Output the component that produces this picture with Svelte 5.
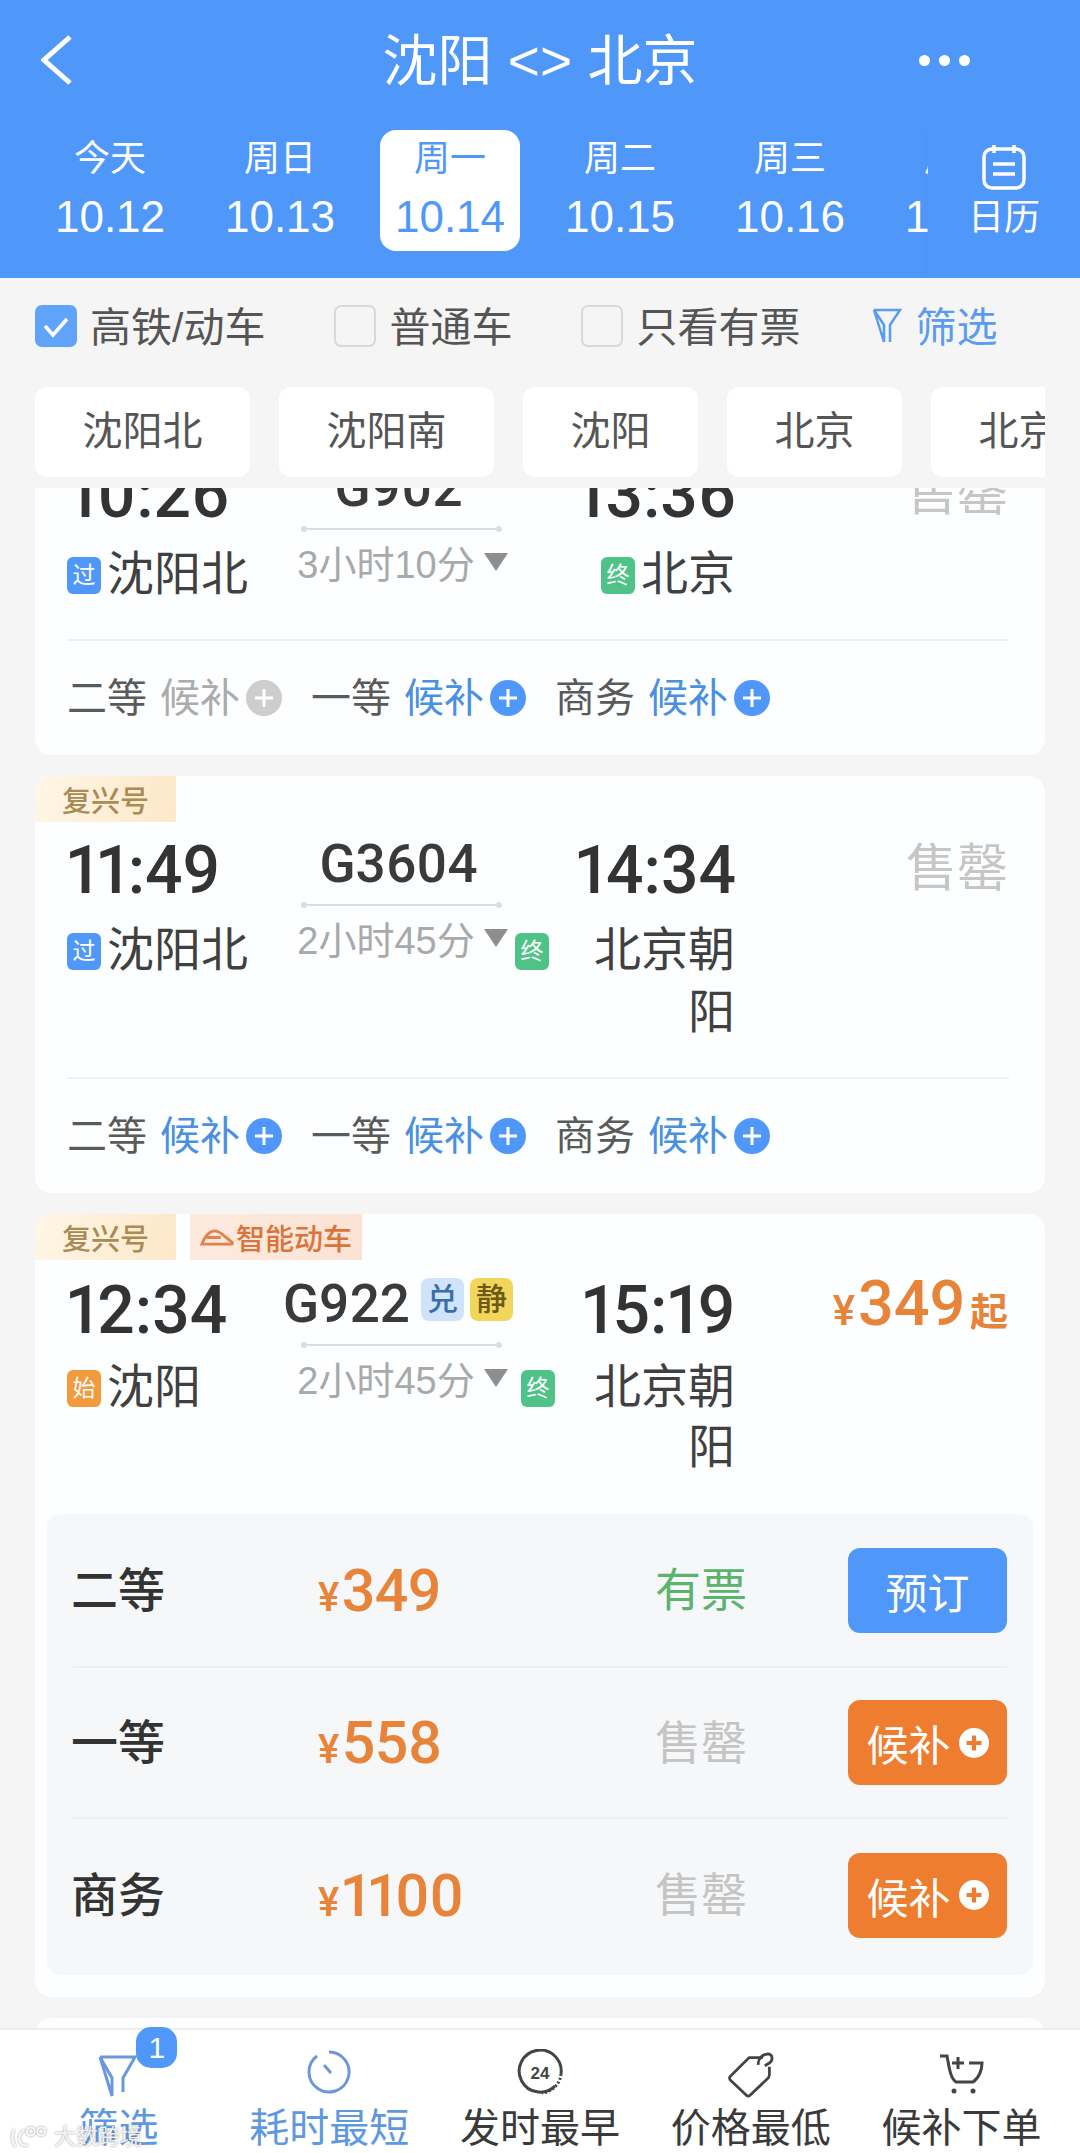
<script lang="ts">
	const days = [
		{ week: '今天', date: '10.12' },
		{ week: '周日', date: '10.13' },
		{ week: '周一', date: '10.14', active: true },
		{ week: '周二', date: '10.15' },
		{ week: '周三', date: '10.16' },
		{ week: '周四', date: '10.17' }
	];
	const checks = [
		{ label: '高铁/动车', on: true },
		{ label: '普通车', on: false },
		{ label: '只看有票', on: false }
	];
	const stations = ['沈阳北', '沈阳南', '沈阳', '北京', '北京朝阳'];
	const seatRows = [
		{ name: '二等', price: '349', status: '有票', ok: true },
		{ name: '一等', price: '558', status: '售罄', ok: false },
		{ name: '商务', price: '1100', status: '售罄', ok: false }
	];
	const tabs = ['筛选', '耗时最短', '发时最早', '价格最低', '候补下单'];
</script>

{#snippet plus(cls)}
	<svg class="plus {cls}" viewBox="0 0 36 36">
		<circle cx="18" cy="18" r="18" />
		<path d="M18 9v18M9 18h18" />
	</svg>
{/snippet}

{#snippet seat(name, off)}
	<div class="seat">
		<span class="seat-name">{name}</span>
		<span class="seat-wait" class:off>候补</span>
		{@render plus(off ? 'grey' : 'blue')}
	</div>
{/snippet}

{#snippet mid(no, dur)}
	<div class="no-cell">
		<span class="no">{no}</span>
	</div>
	<div class="dur">{dur}<i class="tri"></i></div>
{/snippet}

<div class="page">
	<header class="head">
		<div class="title-row">
			<svg class="back" viewBox="0 0 32 50"><path d="M29 2 3 25l26 23" /></svg>
			<h1>沈阳 &lt;&gt; 北京</h1>
			<div class="dots"><i></i><i></i><i></i></div>
		</div>
		<div class="date-row">
			<div class="days">
				{#each days as d}
					<div class="day" class:active={d.active}>
						<span class="week">{d.week}</span>
						<span class="date">{d.date}</span>
					</div>
				{/each}
			</div>
			<div class="cal">
				<svg viewBox="0 0 46 48">
					<rect x="3" y="6" width="40" height="39" rx="8" />
					<path d="M13 2v8M33 2v8M12 21h22M12 31h22" />
				</svg>
				<span>日历</span>
			</div>
		</div>
	</header>

	<div class="filters">
		{#each checks as c}
			<div class="check">
				<span class="box" class:on={c.on}>
					{#if c.on}
						<svg viewBox="0 0 42 42"><path d="M10 21l8 9 14-16" /></svg>
					{/if}
				</span>
				<span class="check-text">{c.label}</span>
			</div>
		{/each}
		<div class="check filter-link">
			<svg viewBox="0 0 30 36"><path d="M2 2h26L18 17v17M12 34V17L2 2z" /></svg>
			<span class="check-text">筛选</span>
		</div>
	</div>

	<div class="chips">
		{#each stations as s}
			<div class="chip">{s}</div>
		{/each}
	</div>

	<div class="list">
		<section class="card first">
			<div class="tags"></div>
			<div class="train">
				<div class="time">10:26</div>
				{@render mid('G902', '3小时10分')}
				<div class="time end">13:36</div>
				<div class="sold">售罄</div>
				<div class="from"><b class="mark pass">过</b>沈阳北</div>
				<div class="to"><b class="mark stop">终</b><span class="to-name">北京</span></div>
			</div>
			<div class="seats">
				{@render seat('二等', true)}
				{@render seat('一等', false)}
				{@render seat('商务', false)}
			</div>
		</section>

		<section class="card">
			<div class="tags"><span class="tag gold">复兴号</span></div>
			<div class="train">
				<div class="time">11:49</div>
				{@render mid('G3604', '2小时45分')}
				<div class="time end">14:34</div>
				<div class="sold">售罄</div>
				<div class="from"><b class="mark pass">过</b>沈阳北</div>
				<div class="to"><b class="mark stop">终</b><span class="to-name">北京朝阳</span></div>
			</div>
			<div class="seats">
				{@render seat('二等', false)}
				{@render seat('一等', false)}
				{@render seat('商务', false)}
			</div>
		</section>

		<section class="card open">
			<div class="tags">
				<span class="tag gold">复兴号</span>
				<span class="tag peach">
					<svg viewBox="0 0 36 18">
						<path d="M2 16C5 8 10 2 16 2c5 0 10 6 18 12q1 2-1 2zM7 9h15" />
					</svg>智能动车
				</span>
			</div>
			<div class="train">
				<div class="time">12:34</div>
				<div class="no-cell wide">
					<span class="no">G922</span>
					<b class="perk blue">兑</b>
					<b class="perk yellow">静</b>
				</div>
				<div class="dur">2小时45分<i class="tri"></i></div>
				<div class="time end">15:19</div>
				<div class="from-price"><small>¥</small>349<em>起</em></div>
				<div class="from"><b class="mark start">始</b>沈阳</div>
				<div class="to"><b class="mark stop">终</b><span class="to-name tight">北京朝阳</span></div>
			</div>
			<div class="panel">
				{#each seatRows as r}
					<div class="row">
						<span class="row-name">{r.name}</span>
						<span class="row-price"><small>¥</small>{r.price}</span>
						<span class="row-status" class:ok={r.ok}>{r.status}</span>
						{#if r.ok}
							<button type="button" class="btn book">预订</button>
						{:else}
							<button type="button" class="btn wait">候补{@render plus('white')}</button>
						{/if}
					</div>
				{/each}
			</div>
		</section>

		<section class="card"></section>
	</div>

	<nav class="tabbar">
		{#each tabs as t, i}
			<div class="tab" class:on={i < 2}>
				<div class="tab-icon">
					{#if i === 0}
						<svg class="i-funnel" viewBox="0 0 40 44"><path d="M2 3h35L25 24v14M14 42V24L2 3z" /></svg>
						<span class="count">1</span>
					{:else if i === 1}
						<svg class="i-line up" viewBox="0 0 46 46">
							<path d="M23 3a20 20 0 1 1-12 4" />
							<path d="M18 16l7 8" />
						</svg>
					{:else if i === 2}
						<svg class="i-line dark up" viewBox="0 0 46 46">
							<path d="M38 37A21 21 0 1 1 44 25" />
							<path class="dash" d="M44 25a21 21 0 0 1-19 19" />
							<text x="23" y="30" text-anchor="middle">24</text>
						</svg>
					{:else if i === 3}
						<svg class="i-line dark" viewBox="0 0 50 50">
							<path d="M38 6H23L2 27q-1 2 1 4l17 16q2 2 4 0l20-19q1-2 1-4v-8" />
							<path d="M33 14c-1-7 5-12 11-12 5 1 5 7 1 10l-5 3" />
						</svg>
					{:else}
						<svg class="i-line dark" viewBox="0 0 46 42">
							<path d="M1 2h7c2 10 3 22 9 26h17c6-4 9-12 9-19H30" />
							<path d="M19 3v12M13 9h12" />
							<circle class="wheel" cx="15" cy="37" r="2.5" />
							<circle class="wheel" cx="34" cy="37" r="2.5" />
						</svg>
					{/if}
				</div>
				<span class="tab-label">{t}</span>
			</div>
		{/each}
		<div class="watermark">
			<svg viewBox="0 0 50 30">
				<path d="M5 5c-3 8-3 16 2 22M18 6c-5 4-8 10-5 16 2 4 6 4 9 3" />
				<circle cx="26" cy="8" r="5" />
				<circle cx="39" cy="8" r="5" />
			</svg>
			<span>大数跨境</span>
		</div>
	</nav>
</div>

<style>
	:global(body) {
		margin: 0;
		background: #f5f5f5;
	}

	.page {
		--blue: #4f98fa;
		--ink: #333;
		width: 1080px;
		height: 2153px;
		display: flex;
		flex-direction: column;
		overflow: hidden;
		background: #f5f5f5;
		color: var(--ink);
		font-family: 'Liberation Sans', 'Noto Sans CJK SC', sans-serif;
	}

	/* header */
	.head {
		height: 278px;
		flex: none;
		background: var(--blue);
		color: #fff;
	}

	.title-row {
		height: 130px;
		display: grid;
		grid-template-columns: 1fr auto 1fr;
		align-items: start;
	}

	.back {
		width: 32px;
		height: 50px;
		margin: 35px 0 0 41px;
		fill: none;
		stroke: #fff;
		stroke-width: 5;
	}

	h1 {
		margin: 23px 0 0;
		font-size: 55px;
		line-height: 76px;
		font-weight: 400;
	}

	.dots {
		justify-self: end;
		display: flex;
		gap: 9px;
		margin: 55px 110px 0 0;
	}

	.dots i {
		width: 11px;
		height: 11px;
		border-radius: 50%;
		background: #fff;
	}

	.date-row {
		display: flex;
		height: 148px;
	}

	.days {
		width: 928px;
		padding-left: 25px;
		box-sizing: border-box;
		display: flex;
		overflow: hidden;
		flex: none;
	}

	.day {
		flex: none;
		width: 140px;
		height: 121px;
		margin: 0 15px;
		display: flex;
		flex-direction: column;
		align-items: center;
		border-radius: 16px;
	}

	.day.active {
		background: #fff;
		color: var(--blue);
	}

	.week {
		font-size: 36px;
		line-height: 50px;
		margin-top: 4px;
	}

	.date {
		font-size: 44px;
		line-height: 54px;
		margin-top: 6px;
		white-space: nowrap;
	}

	.cal {
		flex: 1;
		display: flex;
		flex-direction: column;
		align-items: center;
		box-shadow: -4px 0 6px rgba(40, 90, 170, 0.025);
	}

	.cal svg {
		width: 46px;
		height: 48px;
		margin-top: 13px;
		fill: none;
		stroke: #fff;
		stroke-width: 3.5;
	}

	.cal span {
		font-size: 36px;
		line-height: 46px;
		margin-top: 4px;
	}

	/* filter row */
	.filters {
		display: flex;
		gap: 69px;
		padding: 27px 35px 40px;
		flex: none;
	}

	.check {
		display: flex;
		align-items: center;
		gap: 13px;
		height: 42px;
		font-size: 41px;
		color: #555;
		white-space: nowrap;
	}

	.check-text {
		padding-bottom: 4px;
	}

	.box {
		width: 42px;
		height: 42px;
		box-sizing: border-box;
		border: 2px solid #d9d9d9;
		border-radius: 7px;
	}

	.box.on {
		background: #60a3fb;
		border: none;
	}

	.box svg {
		display: block;
		fill: none;
		stroke: #fff;
		stroke-width: 3.5;
	}

	.filter-link {
		margin-left: 3px;
		color: #5a9ced;
	}

	.filter-link svg {
		width: 30px;
		height: 36px;
		fill: none;
		stroke: #5a9ced;
		stroke-width: 2.5;
	}

	.chips {
		display: flex;
		gap: 29px;
		margin: 0 35px;
		overflow: hidden;
		flex: none;
	}

	.chip {
		flex: none;
		height: 90px;
		line-height: 88px;
		padding: 0 47.5px;
		font-size: 40px;
		color: #555;
		background: #fff;
		border-radius: 12px;
	}

	/* train list */
	.list {
		flex: 1;
		min-height: 0;
		margin-top: 11px;
		padding: 0 35px;
		overflow: hidden;
		display: flex;
		flex-direction: column;
		gap: 21px;
	}

	.card {
		flex: none;
		background: #fdfeff;
		border-radius: 16px;
		min-height: 120px;
		overflow: hidden;
	}

	.first {
		margin-top: -88px;
	}

	.tags {
		height: 46px;
		display: flex;
		gap: 14px;
	}

	.tag {
		height: 46px;
		display: flex;
		align-items: center;
		justify-content: center;
		font-size: 29px;
		font-weight: 500;
	}

	.gold {
		width: 141px;
		color: #a98b55;
		background: linear-gradient(100deg, #fff6e6, #fde8c9);
	}

	.peach {
		width: 172px;
		gap: 2px;
		color: #d9743c;
		background: linear-gradient(100deg, #fdeadf, #fbe3d3);
	}

	.peach svg {
		width: 34px;
		height: 17px;
		fill: none;
		stroke: #e2824a;
		stroke-width: 3;
	}

	.train {
		display: grid;
		grid-template-columns: 228px 215px 225px 1fr;
		grid-template-rows: 85px auto;
		padding: 0 37px 0 32px;
		font-variant-numeric: proportional-nums;
	}

	.time {
		margin-top: 13px;
		font-family: Roboto, 'Liberation Sans', sans-serif;
		font-weight: 500;
		font-size: 66px;
		line-height: 72px;
		color: #333;
		white-space: nowrap;
	}

	.time.end {
		margin-right: -1px;
		text-align: right;
	}

	.no-cell {
		height: 84px;
		width: 201px;
		margin-left: 6px;
		box-sizing: border-box;
		border-bottom: 2px solid #dcdde0;
		display: flex;
		align-items: flex-start;
		justify-content: center;
		gap: 11px;
		position: relative;
	}

	.no-cell::before,
	.no-cell::after {
		content: '';
		position: absolute;
		bottom: -4px;
		width: 6px;
		height: 6px;
		border-radius: 50%;
		background: #dcdde0;
	}

	.no-cell::before {
		left: 0;
	}

	.no-cell::after {
		right: 0;
	}

	.no-cell.wide {
		justify-content: flex-start;
		margin-left: 6px;
		overflow: visible;
	}

	.no {
		margin: 10px 0 0 -6px;
		font-family: Roboto, 'Liberation Sans', sans-serif;
		font-weight: 500;
		font-size: 53px;
		line-height: 64px;
		color: #3a3a3a;
		white-space: nowrap;
	}

	.wide .no {
		margin-left: -18px;
	}

	.perk {
		flex: none;
		width: 43px;
		height: 43px;
		margin-top: 16px;
		border-radius: 8px;
		font-size: 31px;
		line-height: 43px;
		text-align: center;
		font-weight: 500;
	}

	.perk + .perk {
		margin-left: -5px;
	}

	.perk.blue {
		background: #cfe3fb;
		color: #3b6ea8;
	}

	.perk.yellow {
		background: #f2d65c;
		color: #6d5a17;
	}

	.dur {
		grid-row: 2;
		grid-column: 2;
		align-self: start;
		margin-top: 10px;
		font-size: 38px;
		line-height: 48px;
		color: #a9a9a9;
		white-space: nowrap;
		display: flex;
		align-items: center;
		justify-content: center;
		gap: 9px;
	}

	.tri {
		width: 0;
		height: 0;
		margin-bottom: 6px;
		border-left: 12px solid transparent;
		border-right: 12px solid transparent;
		border-top: 18px solid #8e8e8e;
	}

	.from,
	.to {
		grid-row: 2;
		margin-top: 12px;
		padding-bottom: 34px;
		font-size: 47px;
		line-height: 62px;
		color: #404040;
		display: flex;
		align-items: flex-start;
	}

	.from {
		grid-column: 1;
	}

	.to {
		grid-column: 3;
		justify-content: flex-end;
	}

	.to-name {
		max-width: 180px;
		text-align: right;
	}

	.to-name.tight {
		max-width: 174px;
	}

	.mark {
		flex: none;
		width: 34px;
		height: 37px;
		margin: 14px 6px 0 0;
		border-radius: 6px;
		color: #fff;
		font-size: 23px;
		line-height: 37px;
		text-align: center;
		font-weight: 400;
	}

	.pass {
		background: #4f98fa;
	}

	.stop {
		background: #4fc387;
	}

	.start {
		background: #f29a3e;
	}

	.sold {
		grid-row: 1;
		grid-column: 4;
		margin-top: 12px;
		text-align: right;
		font-size: 51px;
		line-height: 70px;
		color: #c6c6c6;
	}

	.from-price {
		grid-row: 1;
		grid-column: 4;
		text-align: right;
		margin-top: 10px;
		font-family: Roboto, 'Liberation Sans', sans-serif;
		font-weight: 500;
		font-size: 63px;
		line-height: 64px;
		color: #e8833a;
		white-space: nowrap;
	}

	.from-price small {
		font-size: 42px;
		margin-right: 3px;
	}

	.from-price em {
		font-style: normal;
		font-size: 38px;
		font-family: 'Noto Sans CJK SC', sans-serif;
		font-weight: 700;
		margin-left: 4px;
	}

	.seats {
		margin: 0 36px 0 32px;
		border-top: 2px solid #eff0f1;
		height: 114px;
		display: flex;
		align-items: center;
	}

	.seat {
		width: 244px;
		flex: none;
		display: flex;
		align-items: center;
		font-size: 40px;
		color: #5a5a5a;
	}

	.seat span {
		padding-bottom: 6px;
	}

	.seat-wait {
		margin-left: 13px;
		color: #4a90e2;
	}

	.seat-wait.off {
		color: #ababab;
	}

	.plus {
		width: 36px;
		height: 36px;
		margin-left: 6px;
		flex: none;
	}

	.plus path {
		fill: none;
		stroke: #fff;
		stroke-width: 3;
	}

	.plus.blue circle {
		fill: var(--blue);
	}

	.plus.grey circle {
		fill: #cdcdcd;
	}

	.plus.white {
		width: 30px;
		height: 30px;
		margin-left: 8px;
	}

	.plus.white circle {
		fill: #fff;
	}

	.plus.white path {
		stroke: #ee7d2f;
		stroke-width: 5;
	}

	.open .train {
		padding-top: 2px;
	}

	.open .from,
	.open .to {
		margin-top: 10px;
		padding-bottom: 0;
		line-height: 60px;
	}

	.open .mark {
		margin-top: 13px;
	}

	.panel {
		margin: 37px 12px 22px;
		padding: 0 26px;
		background: #f6f7f9;
		border-radius: 14px;
		display: grid;
		grid-template-rows: 154px 151px 156px;
	}

	.row {
		display: grid;
		grid-template-columns: 245px 337px 193px 159px;
		align-items: center;
		border-bottom: 2px solid #eeeff1;
	}

	.row:last-child {
		border-bottom: none;
		padding-bottom: 4px;
	}

	.row-name {
		margin-left: -2px;
		padding-bottom: 8px;
		font-size: 47px;
		font-weight: 500;
		color: #333;
	}

	.row-price {
		font-family: Roboto, 'Liberation Sans', sans-serif;
		font-weight: 500;
		font-size: 59px;
		font-variant-numeric: proportional-nums;
		letter-spacing: -0.5px;
		color: #e8833a;
	}

	.row-price small {
		font-size: 40px;
		margin-right: 3px;
	}

	.row-status {
		padding-bottom: 8px;
		font-size: 46px;
		color: #c4c4c4;
	}

	.row-status.ok {
		color: #5cb36c;
	}

	.btn {
		width: 159px;
		height: 85px;
		border: none;
		border-radius: 12px;
		padding: 0;
		color: #fff;
		font: inherit;
		font-size: 42px;
		display: flex;
		align-items: center;
		justify-content: center;
	}

	.book {
		background: #4f98fa;
	}

	.wait {
		background: #ee7d2f;
	}

	/* tab bar */
	.tabbar {
		position: relative;
		flex: none;
		height: 125px;
		box-sizing: border-box;
		padding: 0 13px;
		background: #fff;
		border-top: 2px solid #eeeeee;
		display: grid;
		grid-template-columns: repeat(5, 1fr);
	}

	.tab {
		display: flex;
		flex-direction: column;
		align-items: center;
		color: #3a3a3a;
	}

	.tab.on {
		color: #5e98e0;
	}

	.tab-icon {
		position: relative;
		width: 50px;
		height: 70px;
		display: flex;
		align-items: flex-end;
		justify-content: center;
	}

	.tab-icon svg {
		display: block;
		fill: none;
	}

	.i-funnel {
		flex: none;
		width: 40px;
		height: 44px;
		margin-bottom: 2px;
		stroke: #6c97dd;
		stroke-width: 3;
	}

	.i-line {
		flex: none;
		width: 46px;
		height: 46px;
		margin-bottom: 2px;
		stroke: #6c97dd;
		stroke-width: 3;
	}

	.i-line.up {
		margin-bottom: 5px;
	}

	.i-line.dark {
		stroke: #444;
	}

	.dash {
		stroke-dasharray: 2 2;
	}

	.i-line text {
		fill: #444;
		stroke: none;
		font-size: 17px;
		font-weight: 700;
		font-family: 'Liberation Sans', sans-serif;
	}

	.wheel {
		fill: #444;
		stroke: none;
	}

	.count {
		position: absolute;
		top: -3px;
		left: 43px;
		width: 41px;
		height: 41px;
		border-radius: 15px;
		background: var(--blue);
		color: #fff;
		font-size: 30px;
		line-height: 41px;
		text-align: center;
	}

	.tab-label {
		font-size: 40px;
		line-height: 50px;
		margin-top: 3px;
		white-space: nowrap;
	}

	.tab:last-child .tab-label {
		margin-top: 0;
	}

	.watermark {
		position: absolute;
		left: 10px;
		top: 92px;
		display: flex;
		align-items: center;
		gap: 4px;
		color: rgba(255, 255, 255, 0.9);
		font-size: 22px;
		line-height: 30px;
		text-shadow: 0 0 2px rgba(90, 90, 90, 0.7);
	}

	.watermark svg {
		width: 40px;
		height: 26px;
		fill: none;
		stroke: rgba(255, 255, 255, 0.9);
		stroke-width: 2.5;
		filter: drop-shadow(0 0 1px rgba(90, 90, 90, 0.7));
	}
</style>
